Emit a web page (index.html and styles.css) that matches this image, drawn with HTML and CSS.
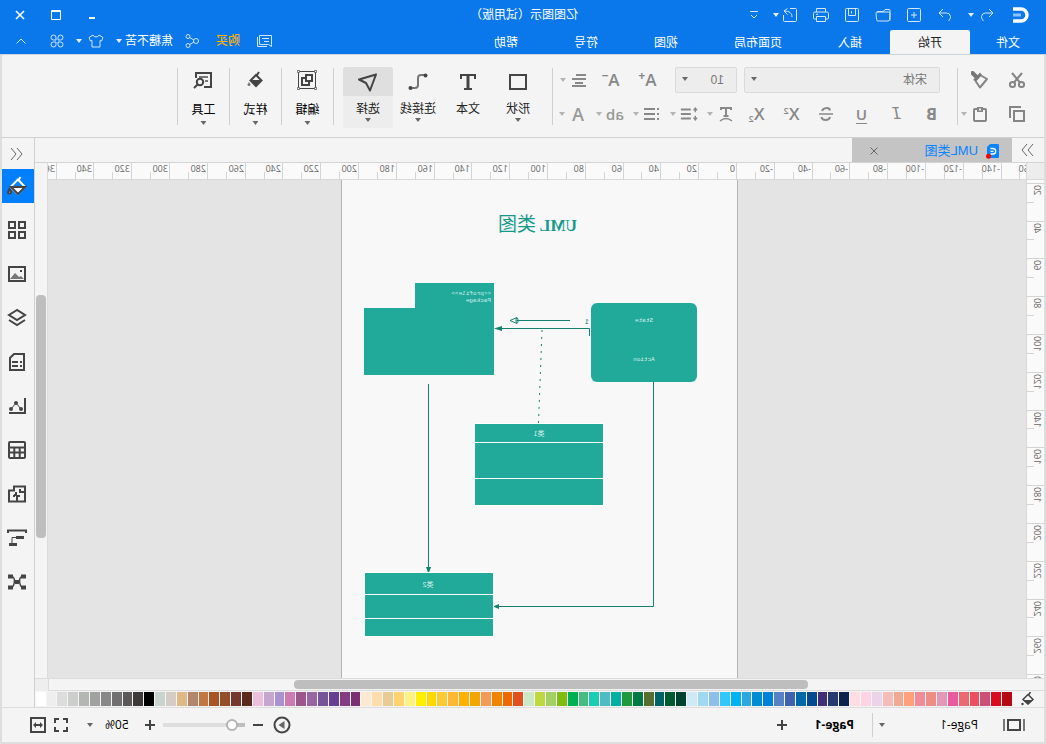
FILE: index.html
```html
<!DOCTYPE html>
<html lang="zh-CN">
<head>
<meta charset="utf-8">
<title>亿图图示</title>
<link rel="stylesheet" href="styles.css">
</head>
<body>
<div class="app">
  <header class="header">
    <div class="titlebar">
      <div class="quick">
        <svg class="logo" width="17" height="16" viewBox="0 0 17 16" fill="none" stroke="#fff"><path d="M16 2H8a6 6 0 0 0 0 12h8" stroke-width="3.4"/><path d="M8 8h8" stroke="#8cc4ff" stroke-width="3"/></svg>
        <button class="qbtn redo" aria-label="重做" disabled><svg width="14" height="14" viewBox="0 0 14 14"><path d="M1 5h7.500a4 4 0 0 1 4 3.500c0 2-1 3.500-2 4.500M1 5l4-4M1 5l4 4"/></svg></button>
        <i class="caret light"></i>
        <button class="qbtn undo" aria-label="撤销" disabled><svg width="14" height="14" viewBox="0 0 14 14"><path d="M13 5H5.500a4 4 0 0 0-4 3.500c0 2 1 3.500 2 4.500M13 5 9 1M13 5 9 9"/></svg></button>
        <button class="qbtn" aria-label="新建"><svg width="14" height="14" viewBox="0 0 14 14"><rect x=".5" y=".5" width="13" height="13" rx="1"/><path d="M7 4v6M4 7h6"/></svg></button>
        <button class="qbtn" aria-label="打开"><svg width="16" height="14" viewBox="0 0 16 14"><path d="M1 12.500V2.500a1 1 0 0 1 1-1h4l1.500 2H13a1 1 0 0 1 1 1M1 5.500q0-1.500 1.500-1.500H14q1 0 1 1.500l-.6 6a1.500 1.500 0 0 1-1.500 1.500H3a1.500 1.500 0 0 1-1.500-1.500z"/></svg></button>
        <button class="qbtn" aria-label="保存"><svg width="14" height="14" viewBox="0 0 14 14"><rect x=".5" y=".5" width="13" height="13" rx="1"/><path d="M3.500 1v6.500h7V1M7.500 3v2.500"/></svg></button>
        <button class="qbtn" aria-label="打印"><svg width="16" height="14" viewBox="0 0 16 14"><path d="M3.500 4V.5h9V4M3.500 11H1.500a1 1 0 0 1-1-1V5.500a1.500 1.500 0 0 1 1.500-1.500h12a1.500 1.500 0 0 1 1.500 1.500V10a1 1 0 0 1-1 1h-2M3.500 8.500h9v5h-9zM11 6.300h2"/></svg></button>
        <button class="qbtn" aria-label="导出"><svg width="14" height="14" viewBox="0 0 14 14"><path d="M7 .5H1.500a1 1 0 0 0-1 1v11a1 1 0 0 0 1 1h11a1 1 0 0 0 1-1V7M5 9c0-4 2.500-6 8-6M9.500 .5 13 3 9.500 6.500"/></svg></button>
        <i class="caret light export"></i>
        <button class="qbtn more" aria-label="自定义"><svg width="8" height="8" viewBox="0 0 8 8"><path d="M0 .5h8M1 4l3 3 3-3"/></svg></button>
      </div>
      <div class="title">亿图图示（试用版）</div>
      <div class="winbtns">
        <button aria-label="最小化"><svg width="10" height="10" viewBox="0 0 10 10"><path d="M2 8h6" stroke-width="2"/></svg></button>
        <button aria-label="最大化"><svg width="10" height="10" viewBox="0 0 10 10"><path d="M.5 .5h9v9h-9zM0 1.500h10"/></svg></button>
        <button aria-label="关闭"><svg width="10" height="10" viewBox="0 0 10 10"><path d="M1 1l8 8M9 1L1 9" stroke-width="1.600"/></svg></button>
      </div>
    </div>
    <div class="menubar">
      <nav class="tabs">
        <button class="tab file">文件</button><button class="tab on">开始</button><button class="tab">插入</button><button class="tab">页面布局</button><button class="tab">视图</button><button class="tab">符号</button><button class="tab">帮助</button>
      </nav>
      <div class="account">
        <button aria-label="消息"><svg width="16" height="14" viewBox="0 0 16 14"><path d="M1.500 10.500V1.500h12v9h-9l-3 2zM4 4.500h7M4 7.500h5M15.500 3v9.500H6"/></svg></button>
        <button class="buy">购买</button>
        <button aria-label="分享"><svg width="14" height="14" viewBox="0 0 14 14"><circle cx="3" cy="7" r="2.500"/><circle cx="11" cy="2.500" r="2"/><circle cx="11" cy="11.500" r="2"/><path d="M5.200 6l4-2.500M5.200 8l4 2.500"/></svg></button>
        <button class="user">焦糖不苦<i class="caret light"></i></button>
        <button class="skin" aria-label="皮肤"><svg width="16" height="14" viewBox="0 0 16 14"><path d="M5 1 1 3.500 2.500 7l1.500-.5V13h8V6.500l1.500.5L15 3.500 11 1c-.5 2.500-5.500 2.500-6 0z"/></svg><i class="caret light"></i></button>
        <button aria-label="应用"><svg width="14" height="14" viewBox="0 0 14 14"><path d="M6 6H3.500A2.500 2.500 0 1 1 6 3.500zM8 6V3.500A2.500 2.500 0 1 1 10.500 6zM6 8v2.500A2.500 2.500 0 1 1 3.500 8zM8 8h2.500A2.500 2.500 0 1 1 8 10.500z"/></svg></button>
        <button class="fold" aria-label="收起"><svg width="10" height="6" viewBox="0 0 10 6"><path d="M.5 5.500 5 1l4.500 4.500"/></svg></button>
      </div>
    </div>
  </header>

  <section class="ribbon">
    <div class="clip">
      <div class="row">
        <button class="sq" aria-label="剪切"><svg width="18" height="18" viewBox="0 0 18 18"><g fill="none" stroke="#858585" stroke-width="2"><circle cx="4.500" cy="13.500" r="2.600"/><circle cx="13.500" cy="13.500" r="2.600"/><path d="M4 2l8 9.500M14 2 6 11.500"/></g></svg></button>
        <button class="sq" aria-label="格式刷"><svg width="18" height="18" viewBox="0 0 18 18"><path d="M16.500 2 13 5.500" stroke="#777" stroke-width="4" stroke-linecap="round"/><path d="M9 1.500l7 7.500-3 1.500-6-6.500z" fill="#777"/><path d="M8 4.500 2 8l7 8.500L13.500 10" fill="none" stroke="#858585" stroke-width="2" stroke-linejoin="round"/></svg></button>
      </div>
      <div class="row">
        <button class="sq" aria-label="复制"><svg width="18" height="18" viewBox="0 0 18 18"><g fill="none" stroke="#858585" stroke-width="2"><path d="M3 5h10v10H3z" transform="translate(-1 1)"/><path d="M5 2h11v11"/></g></svg></button>
        <button class="sq" aria-label="粘贴"><svg width="18" height="18" viewBox="0 0 18 18"><rect x="3" y="4" width="12" height="12" rx="1" fill="none" stroke="#858585" stroke-width="2"/><path d="M6 2h6v5H6z" fill="#858585"/><path d="M8 3.500h2v2H8z" fill="#f4f4f4"/></svg></button>
        <i class="caret pale"></i>
      </div>
    </div>
    <i class="sep"></i>
    <div class="format">
      <div class="row first">
        <span class="combo font"><select aria-label="字体"><option>宋体</option></select><i class="caret"></i></span>
        <span class="combo size"><select aria-label="字号"><option>10</option></select><i class="caret"></i></span>
        <button class="fmt wide" aria-label="增大字号">A<sup class="sign">+</sup></button>
        <button class="fmt wide" aria-label="减小字号">A<sup class="sign">−</sup></button>
        <button class="drop" aria-label="对齐"><svg width="18" height="18" viewBox="0 0 18 18" stroke="#888" stroke-width="2"><path d="M2 4h10M2 8h14M5 12h8M2 15h14"/></svg><i class="caret pale"></i></button>
      </div>
      <div class="row">
        <button class="fmt bold" aria-label="加粗">B</button>
        <button class="fmt italic" aria-label="倾斜">I</button>
        <button class="fmt under" aria-label="下划线">U</button>
        <button class="fmt" aria-label="删除线"><svg width="16" height="16" viewBox="0 0 16 16" fill="none" stroke="#888" stroke-width="2"><path d="M12 5C11 1.500 4.500 1 4 4.500M4 11c1 4 8 4 8.500 0" /><path d="M1 8h14" stroke-width="1.500"/></svg></button>
        <button class="fmt" aria-label="上标">X<sup class="script">2</sup></button>
        <button class="fmt" aria-label="下标">X<sub class="script">2</sub></button>
        <button class="drop" aria-label="文字效果"><svg width="18" height="18" viewBox="0 0 18 18" fill="none" stroke="#888" stroke-width="2"><path d="M4 5V3h10v2M9 3v8M6.500 11h5"/><path d="M3 16q6-5 12 0" stroke-width="1.500"/></svg><i class="caret pale"></i></button>
        <button class="drop" aria-label="行距"><svg width="20" height="18" viewBox="0 0 20 18" fill="none" stroke="#888"><path d="M8 4h11M8 9h11M8 14h11" stroke-width="2"/><path d="M3 3v4M1 5l2-2.500L5 5M3 11v4M1 13l2 2.500L5 13" stroke-width="1.500"/></svg><i class="caret pale"></i></button>
        <button class="drop" aria-label="项目符号"><svg width="18" height="18" viewBox="0 0 18 18" stroke="#888" stroke-width="2"><path d="M2 4h2M2 9h2M2 14h2M6 4h11M6 9h11M6 14h11"/></svg><i class="caret pale"></i></button>
        <button class="drop pale" aria-label="突出显示"><span class="glyph ab">ab</span><i class="caret pale"></i></button>
        <button class="drop pale" aria-label="字体颜色"><span class="glyph">A</span><i class="caret pale"></i></button>
      </div>
    </div>
    <i class="sep"></i>
    <div class="tools">
      <button class="tool"><span class="pic"><svg width="20" height="18" viewBox="0 0 20 18"><rect x="2" y="2" width="16" height="14" fill="none" stroke="#444" stroke-width="2"/></svg></span><span class="cap">形状</span><i class="caret"></i></button>
      <button class="tool"><span class="pic"><svg width="18" height="18" viewBox="0 0 18 18" fill="none" stroke="#444" stroke-width="2"><path d="M2 6V2h14v4"/><path d="M9 2v14" stroke-width="3"/><path d="M5 16h8"/></svg></span><span class="cap">文本</span></button>
      <button class="tool"><span class="pic"><svg width="20" height="18" viewBox="0 0 20 18"><path d="M3 2h4q3 0 3 3v7q0 3 3 3h4" fill="none" stroke="#777" stroke-width="2"/><circle cx="2.500" cy="2.500" r="2" fill="#444"/><circle cx="17.500" cy="15" r="2" fill="#444"/></svg></span><span class="cap">连接线</span><i class="caret"></i></button>
      <button class="tool picked"><span class="pic"><svg width="20" height="20" viewBox="0 0 20 20"><path d="M2 2.500l17 5-7 3.500-4 7.500z" fill="none" stroke="#444" stroke-width="2" stroke-linejoin="round"/></svg></span><span class="cap">选择</span><i class="caret"></i></button>
    </div>
    <i class="sep"></i>
    <button class="tool big"><span class="pic up"><svg width="20" height="20" viewBox="0 0 20 20" fill="none" stroke="#444"><rect x="1.500" y="1.500" width="17" height="17"/><path d="M5 5h6v6H5zM12 8h3v7H8v-3" stroke-width="2"/><g fill="#f4f4f4"><circle cx="1.500" cy="1.500" r="1.200"/><circle cx="18.500" cy="1.500" r="1.200"/><circle cx="1.500" cy="18.500" r="1.200"/><circle cx="18.500" cy="18.500" r="1.200"/></g></svg></span><span class="cap">编辑</span><i class="caret"></i></button>
    <i class="sep"></i>
    <button class="tool big"><span class="pic up"><svg width="18" height="18" viewBox="0 0 18 18"><path d="M5 1l2 3M8 4l5.500 5.500L8 15 2.500 9.500z" fill="none" stroke="#444" stroke-width="2"/><path d="M3 9h10.500L8 15z" fill="#444"/><path d="M15 11l1.500 2.500a1.500 1.500 0 1 1-3 0z" fill="#777"/></svg></span><span class="cap">样式</span><i class="caret"></i></button>
    <i class="sep"></i>
    <button class="tool big"><span class="pic up"><svg width="20" height="18" viewBox="0 0 20 18" fill="none" stroke="#444" stroke-width="2"><path d="M9 16H2V2h15v5"/><path d="M5 6h9M5 10h3" stroke="#777"/><circle cx="13" cy="11" r="3.200"/><path d="M15.500 13.500 19 17"/></svg></span><span class="cap">工具</span><i class="caret"></i></button>
    <i class="sep"></i>
  </section>

  <div class="body">
    <main class="work">
      <div class="docs">
        <button class="chev" aria-label="展开左侧"><svg width="13" height="14" viewBox="0 0 13 14"><path d="M1 1l5 6-5 6M7 1l5 6-5 6"/></svg></button>
        <div class="doc">
          <svg width="14" height="16" viewBox="0 0 14 16"><path d="M1 2q0-1 1-1h8l3 3v10q0 1-1 1H2q-1 0-1-1z" fill="#0a84ff"/><path d="M9.500 5.500H7a2.500 2.500 0 0 0 0 5.500h2.500M6.500 8.300h3" fill="none" stroke="#fff" stroke-width="1.300"/><circle cx="11.500" cy="13.300" r="2.500" fill="#f00"/></svg>
          <span class="docname">UML类图</span>
          <button class="docx" aria-label="关闭文档"><svg width="8" height="8" viewBox="0 0 8 8"><path d="M.5 .5l7 7M7.500 .5l-7 7"/></svg></button>
        </div>
      </div>
      <div class="stage">
        <div class="corner"></div>
        <div class="ruler hr" id="ruler-h"></div>
        <div class="ruler vr" id="ruler-v"></div>
        <div class="canvas">
          <div class="page">
            <svg width="395" height="498" viewBox="309 180 395 498" class="uml">
              <text class="heading latin" x="469" y="231">UML</text>
              <text class="heading" x="510" y="231">类图</text>
              <g class="wire">
                <path d="M456.500 336v-7.500H546"/><path d="M476 320.500h53"/>
                <path d="M504 330l3.500 93" stroke-dasharray="2 5"/>
                <path d="M617.500 384v185"/><path d="M392.500 382v224.500H549"/>
                <path d="M529 317.500v6l7-3z" fill="#fff"/>
              </g>
              <path class="head" d="M544 326l8 2.500-8 2.500zM615 567h5l-2.500 7zM547 604l6 2.500-6 2.500z"/>
              <rect class="node" x="349" y="303" width="106" height="79" rx="6"/>
              <path class="node" d="M552 283h79v25h51v67H552z"/>
              <path class="node cls" d="M442.500 423.500h129v82h-129zM552.500 572.500h129v64h-129z"/>
              <path class="rule" d="M443 442.500h128M443 478.500h128M553 594.500h128M553 618.500h128"/>
              <g class="tiny">
                <text x="402" y="322">State</text><text x="402" y="361">Action</text>
                <text class="start" x="555" y="295">&lt;&lt;profile&gt;&gt;</text><text class="start" x="555" y="302">Package</text>
                <text class="name" x="507" y="436">类1</text><text class="name" x="618" y="587">类2</text>
                <text class="num" x="459" y="324">1</text><text class="num" x="529" y="323">0</text>
              </g>
            </svg>
          </div>
        </div>
        <div class="vbar"><div class="thumb"></div></div>
        <div class="hbar"><div class="thumb"></div></div>
        <div class="nook"></div>
      </div>
      <div class="palette">
        <button aria-label="填充颜色"><svg width="14" height="14" viewBox="0 0 14 14"><path d="M4.500 0l2 3M7 2.500l5 5L7 12 2 7.500z" fill="none" stroke="#444" stroke-width="1.500"/><path d="M2 8h10l-5 4.500z" fill="#444"/><circle cx="12.500" cy="12" r="1.200" fill="#444"/></svg></button>
        <div class="swatches" id="swatches"></div>
      </div>
    </main>
    <aside class="side">
      <button class="chev" aria-label="展开右侧"><svg width="13" height="14" viewBox="0 0 13 14"><path d="M6 1 1 7l5 6M12 1 7 7l5 6"/></svg></button>
      <button class="pane active" aria-label="填充"><svg width="20" height="20" viewBox="0 0 20 20"><path d="M6.500 1l2 3M9 3.500l7.500 7.500L9 18l-7-7z" fill="none" stroke="#fff" stroke-width="2"/><path d="M2 11h14l-7 7z" fill="#fff"/><path d="M17.500 13l1.500 3a1.500 1.500 0 1 1-3 0z" fill="#fff"/></svg></button>
      <button class="pane" aria-label="符号库"><svg width="20" height="20" viewBox="0 0 20 20"><path d="M2 2h6v6H2zM12 2h6v6h-6zM2 12h6v6H2zM12 12h6v6h-6z"/></svg></button>
      <button class="pane" aria-label="图片"><svg width="20" height="20" viewBox="0 0 20 20"><rect x="2" y="3" width="16" height="14"/><path d="M3 15l3-3 2 1 4-4 5 6z" fill="#777" stroke="none"/><path d="M5 7h2"/></svg></button>
      <button class="pane" aria-label="图层"><svg width="20" height="20" viewBox="0 0 20 20"><path d="M10 2l8 5-8 5-8-5zM2 12l8 5 8-5"/></svg></button>
      <button class="pane" aria-label="文档"><svg width="20" height="20" viewBox="0 0 20 20"><path d="M3 2h10l4 4v12H3zM5 10h2M9 10h6M5 14h2M9 14h6"/></svg></button>
      <button class="pane" aria-label="图表"><svg width="20" height="20" viewBox="0 0 20 20"><path d="M2 2v15h16"/><path d="M6 13l5-6 5 6" stroke-width="1"/><g fill="#444" stroke="none"><circle cx="6" cy="13" r="2"/><circle cx="11" cy="7" r="2"/><circle cx="16" cy="13" r="2"/></g></svg></button>
      <button class="pane" aria-label="表格"><svg width="20" height="20" viewBox="0 0 20 20"><rect x="2" y="2" width="16" height="16" rx="1"/><path d="M2 7.500h16M2 12.500h16M7.300 8v10M12.700 8v10"/></svg></button>
      <button class="pane" aria-label="平面图"><svg width="20" height="20" viewBox="0 0 20 20"><path d="M2 2.500h11v4h5v11H2zM2 8h5V5M10 12v5M7 12h3M11 8v3h2M14 12h-2"/></svg></button>
      <button class="pane" aria-label="甘特图"><svg width="20" height="20" viewBox="0 0 20 20"><path d="M1 5V2.500h18V5" stroke-width="2"/><path d="M3 9.500h8M10 16.500h8" stroke-width="3"/><path d="M11 9.500h4v6" stroke-width="1"/></svg></button>
      <button class="pane" aria-label="思维导图"><svg width="20" height="20" viewBox="0 0 20 20"><path d="M4 4.500c6 0 3 11 0 11M16 4.500c-6 0-3 11 0 11M7 10h6" stroke-width="1.500"/><path d="M1 4.500h5M14 4.500h5M1 15.500h5M14 15.500h5M8 10h4" stroke-width="4"/></svg></button>
    </aside>
  </div>

  <footer class="status">
    <button aria-label="页面视图"><svg width="22" height="14" viewBox="0 0 22 14" fill="none" stroke="#444" stroke-width="2"><rect x="5" y="2" width="12" height="10"/><path d="M1 1v12M21 1v12" stroke="#777"/></svg></button>
    <button class="pagepick">Page-1<i class="caret"></i></button>
    <i class="sep"></i>
    <button class="current">Page-1</button>
    <button aria-label="添加页面"><svg width="10" height="10" viewBox="0 0 10 10" stroke="#444" stroke-width="2"><path d="M5 0v10M0 5h10"/></svg></button>
    <div class="zoom">
      <button aria-label="演示"><svg width="18" height="18" viewBox="0 0 18 18"><circle cx="9" cy="9" r="7.500" fill="none" stroke="#444" stroke-width="2"/><path d="M6.500 5l6 4-6 4z" fill="#666"/></svg></button>
      <button class="minus" aria-label="缩小"><svg width="10" height="10" viewBox="0 0 10 10" stroke="#444" stroke-width="2"><path d="M0 5h10"/></svg></button>
      <input class="slider" type="range" min="0" max="100" value="10" aria-label="缩放">
      <button aria-label="放大"><svg width="10" height="10" viewBox="0 0 10 10" stroke="#444" stroke-width="2"><path d="M5 0v10M0 5h10"/></svg></button>
      <button class="percent">50%<i class="caret"></i></button>
      <button aria-label="全屏"><svg width="16" height="16" viewBox="0 0 16 16" fill="none" stroke="#444" stroke-width="2"><path d="M2 6V2h4M10 2h4v4M14 10v4h-4M6 14H2v-4"/></svg></button>
      <button class="fit" aria-label="适合宽度"><svg width="16" height="16" viewBox="0 0 16 16" fill="none" stroke="#444"><rect x="1" y="1" width="14" height="14" stroke-width="2"/><path d="M4 8h8" stroke-width="2"/><path d="M6 5 3 8l3 3zM10 5l3 3-3 3z" fill="#444" stroke="none"/></svg></button>
    </div>
  </footer>
</div>
<script src="app.js"></script>
</body>
</html>
```

FILE: styles.css
```css
* { box-sizing: border-box; }
body { margin: 0; overflow: hidden; }
button { border: 0; margin: 0; padding: 0; background: none; font: inherit; color: inherit; display: flex; align-items: center; justify-content: center; flex: none; }
svg { display: block; flex: none; }

/* The whole window is drawn as a left-right mirror image. */
.app { height: 100vh; display: flex; flex-direction: column; background: #f4f4f4; transform: scaleX(-1); font: 12px/16px "Liberation Sans", "Noto Sans CJK SC", sans-serif; color: #222; }

.caret { width: 6px; height: 4px; flex: none; background: #666; clip-path: polygon(0 0, 100% 0, 50% 100%); }
.caret.light { background: #e4f0ff; }
.caret.pale { background: #b4b4b4; }
.sep { width: 1px; flex: none; background: #cfcfcf; }

.header { background: #0a77eb; color: #fff; flex: none; border-bottom: 1px solid #cdd3da; }
.header svg { fill: none; stroke: #d4e7fc; }
.titlebar { height: 30px; display: grid; grid-template-columns: 1fr auto 1fr; align-items: center; padding-right: 2px; }
.quick { display: flex; align-items: center; padding-left: 17px; }
.header .logo { stroke: #fff; margin-right: 12px; }
.qbtn { width: 31px; height: 28px; }
.redo { width: 26px; }
.undo { margin-left: 7px; }
.export { margin-left: -4px; }
.more { width: 18px; margin-left: 10px; }
.winbtns { display: flex; justify-content: flex-end; }
.winbtns button { width: 36px; height: 26px; }
.header .winbtns svg { stroke: #fff; }
.menubar { height: 24px; display: flex; justify-content: space-between; }
.tabs { display: flex; }
.tab { padding: 2px 28px 0; height: 24px; }
.tab.file { padding: 2px 26px 0; }
.tab.on { background: #f4f4f4; color: #222; border-radius: 2px 2px 0 0; }
.account { display: flex; align-items: center; gap: 12px; padding-right: 16px; padding-bottom: 2px; }
.buy { color: #ffb400; margin: 0 5px; font-weight: 500; }
.user { gap: 3px; }
.skin { gap: 6px; }
.fold { margin-left: 12px; }

.ribbon, .body, .status { border: solid #dedede; border-width: 0 2px; }
.ribbon { flex: none; height: 83px; display: flex; padding: 12px 0 9px; border-bottom: 1px solid #d0d0d0; }
.ribbon > .sep { margin: 1px 0 3px; }
.row { display: flex; align-items: center; height: 26px; }
.clip { width: 86px; padding-left: 17px; display: flex; flex-direction: column; gap: 8px; }
.sq { width: 20px; height: 24px; }
.sq + .sq { margin-left: 17px; }
.clip .caret { margin-left: 3px; }
.format { display: flex; flex-direction: column; gap: 8px; width: 404px; padding-left: 8px; color: #888; }
.row.first { padding-left: 9px; }
.combo { position: relative; display: flex; height: 26px; margin-right: 7px; }
.combo select { appearance: none; width: 100%; border: 1px solid #d9dadc; border-radius: 2px; background: #ededed; color: #777; font: inherit; padding: 0 12px; margin: 0; opacity: 1; }
.combo .caret { position: absolute; right: 7px; top: 10px; }
.combo.font { width: 196px; }
.combo.size { width: 62px; margin-right: 9px; }
.fmt { width: 35px; height: 24px; font: 600 17px/20px "Open Sans", sans-serif; }
.fmt.wide { width: 37px; }
.sign, .script { line-height: 8px; }
.sign { font-size: 12px; font-weight: bold; align-self: flex-start; margin-top: 4px; }
.script { font-size: 9px; }
sup.script { align-self: flex-start; margin-top: 5px; }
sub.script { align-self: flex-end; margin-bottom: 3px; }
.fmt.bold { font-weight: bold; font-size: 16px; }
.fmt.italic { font: oblique 16px/20px "DejaVu Sans Mono", monospace; }
.fmt.under { font-size: 15px; text-decoration: underline; text-underline-offset: 3px; text-decoration-thickness: 1px; }
.drop { width: 37px; height: 24px; gap: 4px; justify-content: flex-start; padding-left: 4px; }
.drop svg, .glyph { width: 18px; }
.glyph { font: 600 18px/20px "Open Sans", sans-serif; color: #999; }
.glyph.ab { font-size: 15px; }
.tools { display: flex; padding: 0 9px; }
.tool { width: 50px; height: 61px; flex-direction: column; justify-content: flex-start; border-radius: 3px; }
.pic { width: 100%; height: 29px; display: flex; align-items: center; justify-content: center; }
.pic.up { padding-bottom: 4px; }
.cap { margin: 5px 0 1px; line-height: 16px; }
.big { width: 51px; color: #000; }
.big .cap { margin-top: 6px; margin-bottom: 3px; }
.picked { background: #ededed; }
.picked .pic { background: #dfdfdf; border-radius: 3px 3px 0 0; }

.body { flex: 1; min-height: 0; display: flex; }
.work { flex: 1; min-width: 0; display: flex; flex-direction: column; }
.docs { height: 24px; display: flex; flex: none; }
.chev { width: 32px; height: 24px; }
.chev svg, .docx svg { fill: none; stroke: #666; }
.doc { width: 160px; background: #c4c4c4; display: flex; align-items: center; padding: 2px 18px 0 12px; }
.docname { font-size: 13px; color: #0a84ff; margin: 0 auto 0 8px; }
.stage { flex: 1; min-height: 0; display: grid; grid-template-columns: 18px 1fr 13px; grid-template-rows: 17px 1fr 13px; border-top: 1px solid #d4d4d4; }
.corner { background: #ededed; border-right: 1px solid #d8d8d8; border-bottom: 1px solid #d8d8d8; }
.ruler { position: relative; overflow: hidden; background: #fafafa; color: #666; font: 9px/9px "Open Sans", sans-serif; }
.hr { border-bottom: 1px solid #d8d8d8; }
.vr { border-right: 1px solid #d8d8d8; grid-row: 2; }
.tick, .num-h, .num-v { position: absolute; }
.tick { background: #d4d4d4; }
.hr .tick { width: 1px; height: 17px; bottom: 0; }
.hr .minor { height: 7px; }
.vr .tick { height: 1px; width: 18px; right: 0; }
.vr .minor { width: 7px; }
.num-h { top: 1px; }
.num-v { left: 2px; writing-mode: vertical-rl; transform: rotate(180deg); }
.canvas { background: #e4e4e4; overflow: hidden; display: flex; grid-row: 2; grid-column: 2; }
.page { flex: none; margin-left: 288px; border: solid #b4b4b4; border-width: 0 1px; background: #f8f8f8; }
.vbar { grid-row: 1 / 3; grid-column: 3; border-left: 1px solid #dcdcdc; padding: 132px 1px 0; }
.vbar .thumb { height: 243px; width: 10px; border-radius: 4px; background: #bebebe; margin: auto; }
.hbar { grid-row: 3; grid-column: 1 / 3; border: solid #dcdcdc; border-width: 1px 1px 1px 0; padding: 1px 0 0 236px; }
.hbar .thumb { width: 514px; height: 9px; border-radius: 4px; background: #bebebe; }
.nook { grid-row: 3; grid-column: 3; background: #eee; border-top: 1px solid #dcdcdc; }
.palette { height: 16px; flex: none; display: flex; align-items: center; }
.palette button { width: 32px; }
.swatches { flex: 1; display: flex; gap: 1px; height: 14px; padding-right: 1px; }
.swatch { flex: 1; }

.heading { font: 19px "Noto Sans CJK SC", sans-serif; fill: #16998a; }
.heading.latin { font: bold 16px "Liberation Serif", serif; }
.wire { fill: none; stroke: #16806e; }
.head { fill: #16806e; }
.node { fill: #21a999; }
.cls { stroke: #fff; }
.rule { stroke: #fff; }
.tiny { font: 6px "Liberation Mono", monospace; fill: #d4f0ec; text-anchor: middle; }
.tiny .start { text-anchor: start; }
.tiny .name { font: 7px "Liberation Sans", "Noto Sans CJK SC", sans-serif; }
.tiny .num { font-size: 7px; fill: #16806e; }

.side { width: 33px; flex: none; border-left: 1px solid #d0d0d0; display: flex; flex-direction: column; }
.side .chev { height: 31px; }
.side .chev, .pane { padding-left: 2px; }
.pane { width: 32px; height: 34px; margin-bottom: 10px; }
.pane svg { fill: none; stroke: #444; stroke-width: 2; }
.pane.active { background: #007fff; }

.status { height: 37px; flex: none; border-top: 1px solid #dcdcdc; border-bottom: 2px solid #dedede; display: flex; align-items: center; padding: 0 28px 0 19px; font-family: "Open Sans", sans-serif; color: #000; }
.pagepick { width: 99px; margin-left: 25px; justify-content: space-between; }
.status .sep { height: 24px; margin: 0 18px 0 6px; }
.current { font-weight: bold; margin-right: 28px; }
.zoom { margin-left: auto; display: flex; align-items: center; }
.minus { margin: 0 8px 0 10px; }
.slider { appearance: none; width: 82px; height: 14px; margin: 0 8px 0 0; background: linear-gradient(to right, #bebebe 14px, #dedede 14px) center / 100% 4px no-repeat; }
.slider::-webkit-slider-thumb { appearance: none; width: 12px; height: 12px; border: 2px solid #b4b4b4; border-radius: 50%; background: #fff; }
.percent { margin: 0 18px 0 16px; gap: 12px; }
.fit { margin-left: 7px; }
```

FILE: app.js
```js
const STEP = 37.8;
const ORIGIN_X = 289;
const ORIGIN_Y = -35;

function add(parent, cls, prop, pos, text) {
  const el = document.createElement("span");
  el.className = cls;
  el.style[prop] = Math.round(pos) + "px";
  if (text !== undefined) el.textContent = text;
  parent.appendChild(el);
}

const h = document.getElementById("ruler-h");
for (let v = -160; v <= 360; v += 20) {
  const x = ORIGIN_X + (v / 20) * STEP;
  add(h, "tick", "left", x);
  add(h, "tick minor", "left", x + STEP / 2);
  add(h, "num-h", "left", x + 2, v);
}

const r = document.getElementById("ruler-v");
for (let v = 20; v <= 280; v += 20) {
  const y = ORIGIN_Y + (v / 20) * STEP;
  add(r, "tick", "top", y);
  add(r, "tick minor", "top", y + STEP / 2);
  add(r, "num-v", "top", y + 2, v);
}

const colors = ("b40a14 db0a1e cb5078 ec5060 eb6a70 e85c9e e299b8 ee8c86 f08c9a ffa07a f0aa94 f6bcba ebd4e8 ffd2e4 ffdde2 " +
  "0e2250 243a70 402e78 044a90 0069a8 3e62b0 5682c4 0080d8 008cd2 2ba8e0 00b4f4 30c8fa 8cc0ea a0d8f0 cfeaf6 " +
  "004230 005a30 006464 566e2e 007a44 20983e 00b0a0 50bcc2 1accb4 46bc80 00b054 80bc10 a2d064 c0d840 cce8c8 " +
  "e25020 ee6a00 f08400 f49a56 f2a600 ffb000 ffb834 facb32 ffd800 ffee00 fef280 ffd470 e8cc96 ffdcac fde8d0 " +
  "7a3072 833e81 663e94 75549a 9866a0 9c568a cc7cb0 aa92d0 c6a6cc ecc0dc 5a2a1c 74382e 944e2a aa5426 c07840 " +
  "b2866c deb887 d6ccc6 c8d4cc 000000 3e3838 5a5858 707070 888888 a0a2a0 b4b6b4 cccecc dcdcdc eeeeee ffffff").split(" ");
const box = document.getElementById("swatches");
for (const c of colors) {
  const s = document.createElement("span");
  s.className = "swatch";
  s.style.background = "#" + c;
  box.appendChild(s);
}
```
